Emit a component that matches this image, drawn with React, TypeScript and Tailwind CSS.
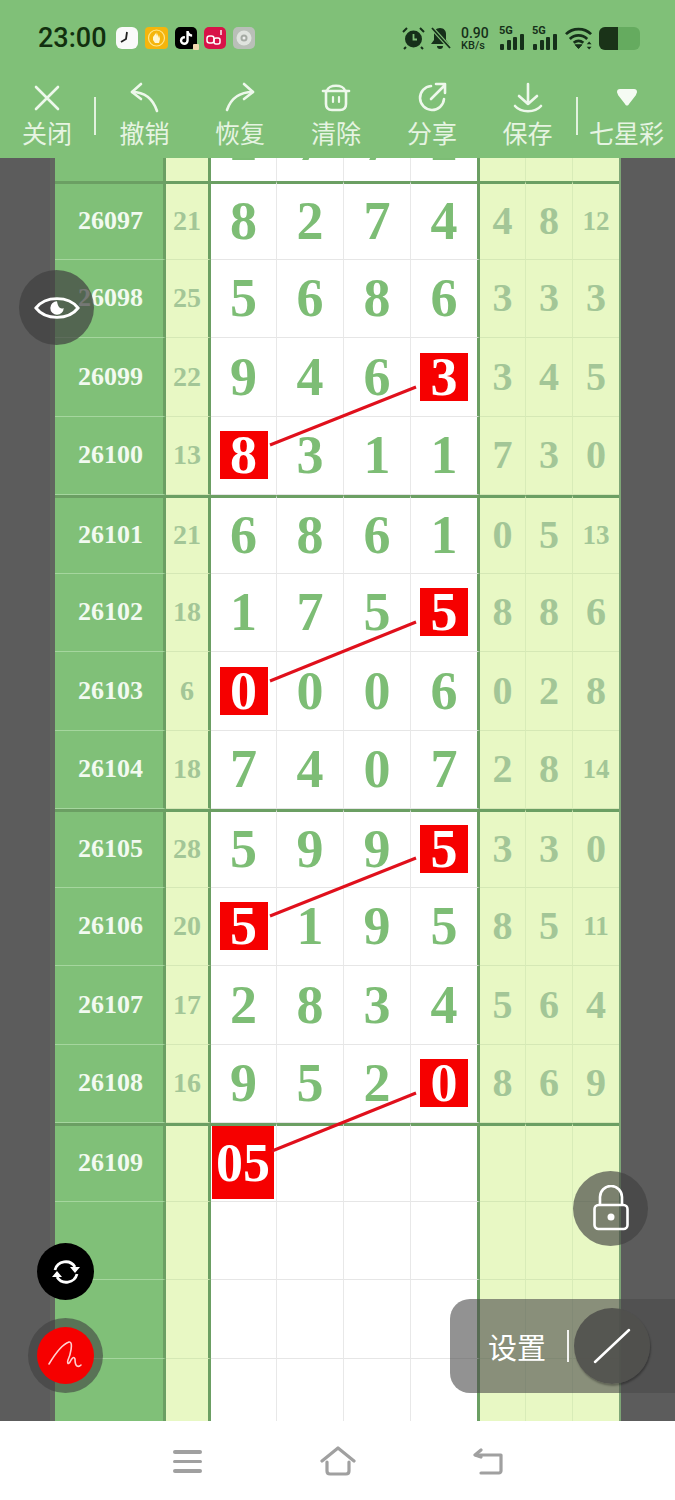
import React from "react";
import { FaTiktok } from "react-icons/fa";

type R = { p: string; s: string; d: string; hit?: number; r: string[]; g?: boolean };
const rows: R[] = [
  { p: "26097", s: "21", d: "8274", r: ["4", "8", "12"], g: true },
  { p: "26098", s: "25", d: "5686", r: ["3", "3", "3"] },
  { p: "26099", s: "22", d: "9463", hit: 3, r: ["3", "4", "5"] },
  { p: "26100", s: "13", d: "8311", hit: 0, r: ["7", "3", "0"] },
  { p: "26101", s: "21", d: "6861", r: ["0", "5", "13"], g: true },
  { p: "26102", s: "18", d: "1755", hit: 3, r: ["8", "8", "6"] },
  { p: "26103", s: "6", d: "0006", hit: 0, r: ["0", "2", "8"] },
  { p: "26104", s: "18", d: "7407", r: ["2", "8", "14"] },
  { p: "26105", s: "28", d: "5995", hit: 3, r: ["3", "3", "0"], g: true },
  { p: "26106", s: "20", d: "5195", hit: 0, r: ["8", "5", "11"] },
  { p: "26107", s: "17", d: "2834", r: ["5", "6", "4"] },
  { p: "26108", s: "16", d: "9520", hit: 3, r: ["8", "6", "9"] },
];

const serif = "font-['Liberation_Serif',serif] font-bold leading-none";
const gridCols = "grid grid-cols-[111px_45px_66px_67px_67px_69px_46px_47px_46px] grid-rows-[1fr]";

function Row({ p, s, d, hit, r, g, last, code }: Partial<R> & { last?: boolean; code?: boolean }) {
  const top = g ? "border-t-[3px] border-t-[#6b9f63]" : "";
  const bottom = last ? "" : "border-b";
  return (
    <div className={`${gridCols} h-[78.5px] shrink-0 ${serif}`}>
      <div className={`${top} ${bottom} border-b-[#a5d69e] bg-[#80c078] border-r-[3px] border-r-[#6b9f63] flex items-center justify-center text-[26px] text-[#f2faf0] pl-[3px]`}>{p}</div>
      <div className={`${top} ${bottom} border-b-[#d5e8b5] bg-[#e8f8c4] border-r-[3px] border-r-[#6b9f63] flex items-center justify-center text-[28px] text-[#a3c697]`}>{s}</div>
      {[0, 1, 2, 3].map((i) => (
        <div key={i} className={`${top} ${bottom} border-b-[#e6e6e6] bg-white ${i < 3 ? "border-r border-r-[#e8e8e8]" : "border-r-[3px] border-r-[#6b9f63]"} flex items-center justify-center text-[54px] text-[#7dbd75] ${code && i === 0 ? "items-start" : ""}`}>
          {code && i === 0 ? (
            <span className="w-[62px] h-[73px] shrink-0 bg-[#f60000] text-white flex items-center justify-center ml-[-1px]">05</span>
          ) : d && d[i] ? (
            hit === i ? (
              <span className="w-[48px] h-[48px] bg-[#f60000] text-white flex items-center justify-center">{d[i]}</span>
            ) : (
              d[i]
            )
          ) : null}
        </div>
      ))}
      {[0, 1, 2].map((i) => (
        <div key={i} className={`${top} ${bottom} border-b-[#d5e8b5] bg-[#e8f8c4] ${i < 2 ? "border-r border-r-[#d8ecb8]" : ""} flex items-center justify-center text-[#a3c697] ${r && r[i]?.length === 2 ? "text-[27px]" : "text-[40px]"}`}>
          {r ? r[i] : null}
        </div>
      ))}
    </div>
  );
}

const white = "#eef8ec";
function ToolIcon({ children }: { children: React.ReactNode }) {
  return (
    <svg width="32" height="32" viewBox="0 0 32 32" fill="none" stroke={white} strokeWidth="2.6" strokeLinecap="round" strokeLinejoin="round">
      {children}
    </svg>
  );
}

function Tool({ w, label, children }: { w: string; label: string; children: React.ReactNode }) {
  return (
    <div className={`${w} flex flex-col items-center`}>
      <div className="h-[32px] w-[32px]">{children}</div>
      <div className="text-[25px] leading-[30px] mt-[3px] text-[#e6f4e2] whitespace-nowrap font-['Noto_Sans_CJK_SC',sans-serif]">{label}</div>
    </div>
  );
}

function Bars() {
  return (
    <div className="relative w-[26px] h-[24px]">
      <span className="absolute left-0 top-[-1px] text-[11px] leading-[11px] font-bold text-[#16301a] font-['Roboto',sans-serif]">5G</span>
      <div className="absolute left-[1px] bottom-0 flex items-end gap-[2.5px]">
        <span className="w-[4px] h-[6px] bg-[#16301a] rounded-[1px]" />
        <span className="w-[4px] h-[10px] bg-[#16301a] rounded-[1px]" />
        <span className="w-[4px] h-[13px] bg-[#16301a] rounded-[1px]" />
        <span className="w-[4px] h-[16px] bg-[#16301a] rounded-[1px]" />
      </div>
    </div>
  );
}

export default function App() {
  return (
    <div className="relative w-[675px] h-[1500px] overflow-hidden flex flex-col bg-white font-['Noto_Sans_CJK_SC',sans-serif]">
      {/* header */}
      <div className="h-[158px] bg-[#80c078] shrink-0 flex flex-col">
        <div className="h-[82px] flex items-start pt-[23px] pl-[38px]">
          <span className="text-[27px] leading-[30px] text-[#12300f] font-['Roboto',sans-serif] font-medium w-[78px]">23:00</span>
          <div className="flex items-center gap-[7px] h-[30px]">
            <svg width="22" height="22" viewBox="0 0 22 22"><rect width="22" height="22" rx="6" fill="#fafafa" /><path d="M11 5l-1 7-5 3" stroke="#222" strokeWidth="1.8" fill="none" /></svg>
            <svg width="23" height="22" viewBox="0 0 23 22"><rect width="23" height="22" rx="4" fill="#f5b50c" /><circle cx="11.5" cy="11" r="8" fill="none" stroke="#ffe68a" strokeWidth="1.2" /><path d="M8 10v3l2 3h4l1-4-1-4-1 3V6l-1 3V5l-1 4V6Z" fill="#fff6d0" /></svg>
            <div className="w-[22px] h-[22px] rounded-[5px] bg-black flex items-center justify-center relative">
              <FaTiktok className="text-white text-[14px]" />
              <span className="absolute right-[-2px] bottom-[-1px] w-[6px] h-[6px] bg-[#f3d9b0] rounded-[1px]" />
            </div>
            <svg width="22" height="22" viewBox="0 0 22 22"><rect width="22" height="22" rx="5" fill="#d81248" /><rect x="3" y="9" width="7" height="7" rx="2.500" fill="none" stroke="#fff" strokeWidth="1.5" /><rect x="10" y="11" width="6" height="6" rx="2" fill="none" stroke="#fff" strokeWidth="1.5" /><path d="M17 3v5" stroke="#fff" strokeWidth="1.4" /></svg>
            <svg width="22" height="22" viewBox="0 0 22 22"><rect width="22" height="22" rx="5" fill="#b9bfb8" /><circle cx="11" cy="11" r="7.500" fill="#dfe3de" /><circle cx="11" cy="11" r="3.500" fill="#a5aba4" /><circle cx="11" cy="11" r="1.500" fill="#eceeec" /></svg>
          </div>
          <div className="ml-auto flex items-center h-[30px] pr-[35px]">
            <svg width="23" height="24" viewBox="0 0 23 24" fill="#16301a"><circle cx="11.500" cy="13" r="8.500" /><path d="M11.500 8v5.500H15" stroke="#80c078" strokeWidth="1.800" fill="none" /><path d="M1 6l4-4M22 6l-4-4M4 21l-2 2M19 21l2 2" stroke="#16301a" strokeWidth="2" /></svg>
            <svg className="ml-[4px]" width="22" height="24" viewBox="0 0 22 24" fill="#16301a"><path d="M11 2c-4 0-6 3-6 6v6l-3 4h18l-3-4V8c0-3-2-6-6-6Z" /><path d="M8 20a3 3 0 0 0 6 0Z" /><path d="M2 1l19 21" stroke="#80c078" strokeWidth="4" /><path d="M3 2l18 20" stroke="#16301a" strokeWidth="1.800" /></svg>
            <div className="flex flex-col items-start w-[30px] ml-[10px] font-['Roboto',sans-serif] font-medium text-[#16301a]">
              <span className="text-[14px] leading-[14px]">0.90</span>
              <span className="text-[11px] leading-[11px]">KB/s</span>
            </div>
            <div className="ml-[8px]"><Bars /></div>
            <div className="ml-[7px]"><Bars /></div>
            <svg width="28" height="24" viewBox="0 0 29 24" fill="none" stroke="#16301a" strokeWidth="2.800" className="ml-[7px]"><path d="M1 8c7-7 19-7 26 0" /><path d="M5 13c5-5 13-5 18 0" /><path d="M9 17c3-2.500 7-2.500 10 0" /><path d="M10.500 19h7L14 23Z" fill="#16301a" strokeWidth="1" /><path d="M25 15.500l2.500 3h-5ZM25 24l2.500-3h-5Z" fill="#16301a" strokeWidth="0" /></svg>
            <div className="w-[41px] h-[23px] rounded-[6px] bg-[#65ab5f] overflow-hidden ml-[6px]">
              <div className="w-[19px] h-full bg-[#1a3318]" />
            </div>
          </div>
        </div>
        <div className="flex items-start">
          <Tool w="w-[94px]" label="关闭"><ToolIcon><path d="M5 5l22 22M27 5L5 27" /></ToolIcon></Tool>
          <div className="w-[2px] h-[38px] mt-[15px] bg-[#e2f2de]" />
          <Tool w="w-[97px]" label="撤销"><ToolIcon><path d="M12 2L3 10l9 7" /><path d="M3 10c10 0 20 4 25 19" /></ToolIcon></Tool>
          <Tool w="w-[94px]" label="恢复"><ToolIcon><path d="M20 2l9 8-9 7" /><path d="M29 10C16 10 7 16 3 28" /></ToolIcon></Tool>
          <Tool w="w-[98px]" label="清除"><ToolIcon><path d="M7 9C8 2 24 2 25 9" /><path d="M3 9h26" /><path d="M6 9v13c0 4 2 6 6 6h8c4 0 6-2 6-6V9" /><path d="M13 15v5M19 15v5" strokeWidth="2.200" /></ToolIcon></Tool>
          <Tool w="w-[94px]" label="分享"><ToolIcon><path d="M15 4a12 12 0 1 0 13 13" /><path d="M15 17L29 3M20 2h9v9" /></ToolIcon></Tool>
          <Tool w="w-[97px]" label="保存"><ToolIcon><path d="M16 2v20M7 14l9 8 9-8" /><path d="M3 24c6 7 20 7 26 0" /></ToolIcon></Tool>
          <div className="w-[2px] h-[38px] mt-[15px] bg-[#e2f2de]" />
          <Tool w="w-[97px]" label="七星彩"><svg width="32" height="32" viewBox="0 0 32 32"><path d="M6 10c0-2 1-3 3-3h14c2 0 3 1 3 3 0 1-1 2-1 3l-7 9c-1 2-3 2-4 0l-7-9c0-1-1-2-1-3Z" fill="#f5fbf3" /></svg></Tool>
        </div>
      </div>

      {/* board */}
      <div className="relative flex-1 flex overflow-hidden">
        <div className="w-[55px] flex shrink-0">
          <div className="w-[50px] bg-[#5c5c5c]" />
          <div className="w-[5px] bg-[#61665f]" />
        </div>
        <div className="w-[564px] flex flex-col shrink-0">
          <div className="h-[23px] overflow-hidden shrink-0 flex flex-col justify-end">
            <Row d="2772" last />
          </div>
          {rows.map((r) => (
            <Row key={r.p} {...r} />
          ))}
          <Row p="26109" g code />
          <Row />
          <Row />
          <Row last />
        </div>
        <div className="w-[56px] flex shrink-0">
          <div className="w-[2px] bg-[#7ea676]" />
          <div className="flex-1 bg-[#5c5c5c]" />
        </div>

        {/* connecting lines */}
        <svg className="absolute left-0 top-0 pointer-events-none" width="675" height="1263" viewBox="0 158 675 1263" fill="none" stroke="#e0101c" strokeWidth="3">
          <path d="M270 445L416 387" />
          <path d="M270 681L416 622" />
          <path d="M270 916L416 858" />
          <path d="M272 1151L416 1093" />
        </svg>

        {/* eye */}
        <div className="absolute left-[19px] top-[112px] w-[75px] h-[75px] rounded-full bg-[#404040]/70 flex items-center justify-center">
          <svg width="46" height="32" viewBox="0 0 48 32" fill="none">
            <path d="M2 16C12 3 36 3 46 16C36 29 12 29 2 16Z" stroke="#fff" strokeWidth="3" />
            <path d="M24 9a7 7 0 1 0 7 7c-3 1.500-6 0-7-7Z" fill="#fff" />
          </svg>
        </div>
        {/* lock */}
        <div className="absolute left-[573px] top-[1013px] w-[75px] h-[75px] rounded-full bg-[#404040]/65 flex items-center justify-center">
          <svg width="38" height="48" viewBox="0 0 38 48" fill="none" stroke="#fff" strokeWidth="2.600">
            <path d="M8 20v-8a11 11 0 0 1 22 0v8" />
            <rect x="2.500" y="20" width="33" height="24" rx="4" />
            <circle cx="19" cy="32" r="3.500" fill="#fff" stroke="none" />
          </svg>
        </div>
        {/* sync */}
        <div className="absolute left-[37px] top-[1085px] w-[57px] h-[57px] rounded-full bg-black flex items-center justify-center">
          <svg width="32" height="28" viewBox="0 0 32 28" fill="none" stroke="#fff" strokeWidth="2.800">
            <path d="M5 12A11 11 0 0 1 25 9" />
            <path d="M27 16A11 11 0 0 1 7 19" />
            <path d="M20 9h10l-5 6ZM2 19h10l-5-6Z" fill="#fff" stroke="none" />
          </svg>
        </div>
        {/* pen */}
        <div className="absolute left-[28px] top-[1160px] w-[75px] h-[75px] rounded-full bg-[#404040]/60 flex items-center justify-center">
          <div className="w-[57px] h-[57px] rounded-full bg-[#f60000] flex items-center justify-center">
            <svg width="38" height="36" viewBox="0 0 38 36" fill="none" stroke="#ffd0d0" strokeWidth="1.600" strokeLinecap="round" strokeLinejoin="round">
              <path d="M2 26C8 16 16 6 22 4c5-1 1 14-1 18-1 3 0 5 2 2 2-4 4-6 5-3 0 3 0 6 2 7 2 1 3 0 4-1" />
            </svg>
          </div>
        </div>
        {/* settings pill */}
        <div className="absolute left-[450px] top-[1141px] w-[225px] h-[94px] rounded-l-[20px] bg-[#4a4a4a]/60 flex items-center">
          <span className="ml-[38px] text-[29px] leading-[40px] text-white font-['Noto_Sans_CJK_SC',sans-serif]">设置</span>
          <div className="ml-[21px] w-[2px] h-[32px] bg-white/90" />
          <div className="ml-[5px] w-[76px] h-[76px] rounded-full bg-[#50504c]/90 shadow-[1px_2px_2px_rgba(0,0,0,0.3)] flex items-center justify-center">
            <svg width="38" height="36" viewBox="0 0 38 36" stroke="#fff" strokeWidth="2.500" strokeLinecap="round"><path d="M2 34L36 2" /></svg>
          </div>
        </div>
      </div>

      {/* nav */}
      <div className="h-[79px] shrink-0 bg-white flex items-start">
        <div className="ml-[173px] mt-[29px] w-[29px] flex flex-col gap-[6px]">
          <span className="h-[3.500px] rounded-full bg-[#a0a0a0]" />
          <span className="h-[3.500px] rounded-full bg-[#a0a0a0]" />
          <span className="h-[3.500px] rounded-full bg-[#a0a0a0]" />
        </div>
        <svg className="ml-[118px] mt-[25px]" width="36" height="30" viewBox="0 0 36 30" fill="none" stroke="#a0a0a0" strokeWidth="3.200" strokeLinejoin="round" strokeLinecap="round">
          <path d="M2 15L18 2l16 13" />
          <path d="M7 16v9c0 2 1 3 3 3h16c2 0 3-1 3-3v-9" />
        </svg>
        <svg className="ml-[117px] mt-[27px]" width="32" height="28" viewBox="0 0 32 28" fill="none" stroke="#a0a0a0" strokeWidth="3.200" strokeLinejoin="round" strokeLinecap="round">
          <path d="M8 2L2 7l6 2" />
          <path d="M3 7h25v16c0 1-1 2-2 2H8" />
        </svg>
      </div>
    </div>
  );
}
